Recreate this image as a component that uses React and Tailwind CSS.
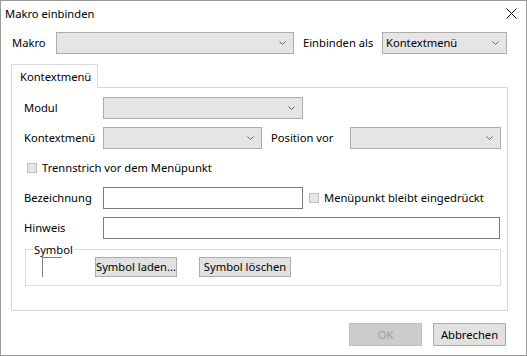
const Chevron = () => (
  <svg width="7" height="4" viewBox="0 0 7 4" className="shrink-0">
    <path d="M0.5 0.5 L3.5 3.5 L6.5 0.5" fill="none" stroke="#606060" strokeWidth="1" />
  </svg>
)

function Combo({ className, value }) {
  return (
    <div
      className={`flex h-[22px] shrink-0 items-center justify-between border border-[#adadad] bg-[#e5e5e5] pl-[3px] pr-[7px] ${className}`}
    >
      <span>{value}</span>
      <Chevron />
    </div>
  )
}

function CheckBox({ label }) {
  return (
    <div className="flex items-center whitespace-nowrap">
      <div className="mr-[5px] h-[10px] w-[10px] border border-[#bcbcbc] bg-[#e6e6e6]" />
      <span>{label}</span>
    </div>
  )
}

function Button({ className, children }) {
  return (
    <div
      className={`flex shrink-0 items-center justify-center whitespace-nowrap border border-[#adadad] bg-[#e1e1e1] ${className}`}
    >
      {children}
    </div>
  )
}

export default function App() {
  return (
    <div
      className="flex h-[356px] w-[527px] flex-col border border-[#999999] bg-white text-[11.2px] leading-none text-black"
      style={{ fontFamily: '"Noto Sans", sans-serif' }}
    >
      {/* title bar */}
      <div className="flex h-[25px] shrink-0 items-center justify-between pl-[4px] pr-[9px]">
        <span>Makro einbinden</span>
        <svg width="11" height="11" viewBox="0 0 11 11">
          <path d="M0.5 0.5 L10.5 10.5 M10.5 0.5 L0.5 10.5" stroke="#111" strokeWidth="1" />
        </svg>
      </div>

      {/* Makro row */}
      <div className="mt-[6px] flex items-center pl-[11px]">
        <span className="w-[44px] shrink-0">Makro</span>
        <Combo className="w-[238px]" />
        <span className="ml-[9px] w-[79px] shrink-0">Einbinden als</span>
        <Combo className="w-[125px]" value="Kontextmenü" />
      </div>

      {/* tab */}
      <div className="mt-[10px] flex flex-col pl-[10px]">
        <div className="relative z-10 -mb-px flex h-[24px] w-[87px] items-center border-x border-t border-[#d9d9d9] bg-white pl-[8px]">
          Kontextmenü
        </div>
        <div className="flex h-[224px] w-[497px] flex-col border border-[#d9d9d9] pl-[12px] pt-[9px]">
          <div className="flex items-center">
            <span className="w-[79px] shrink-0">Modul</span>
            <Combo className="w-[200px]" />
          </div>
          <div className="mt-[8px] flex items-center">
            <span className="w-[79px] shrink-0">Kontextmenü</span>
            <Combo className="w-[159px]" />
            <span className="ml-[9px] w-[79px] shrink-0">Position vor</span>
            <Combo className="w-[151px]" />
          </div>
          <div className="mt-[11px] flex h-[16px] items-center pl-[3px]">
            <CheckBox label="Trennstrich vor dem Menüpunkt" />
          </div>
          <div className="mt-[11px] flex items-center">
            <span className="w-[79px] shrink-0">Bezeichnung</span>
            <div className="h-[22px] w-[200px] shrink-0 border border-[#7a7a7a] bg-white" />
            <div className="ml-[6px]">
              <CheckBox label="Menüpunkt bleibt eingedrückt" />
            </div>
          </div>
          <div className="mt-[8px] flex items-center">
            <span className="w-[79px] shrink-0">Hinweis</span>
            <div className="h-[22px] w-[397px] shrink-0 border border-[#7a7a7a] bg-white" />
          </div>

          {/* Symbol group */}
          <div className="relative ml-[1px] mt-[10px] flex h-[37px] w-[476px] items-start border border-[#dcdcdc] pl-[16px] pt-[7px]">
            <span className="absolute -top-[8px] left-[7px] bg-white px-[1px] leading-[15px]">Symbol</span>
            <div className="h-[20px] w-[20px] shrink-0 border-l border-t border-[#808080]" />
            <Button className="ml-[33px] h-[20px] w-[82px]">Symbol laden...</Button>
            <Button className="ml-[22px] h-[20px] w-[92px]">Symbol löschen</Button>
          </div>
        </div>
      </div>

      {/* dialog buttons */}
      <div className="mt-[12px] flex justify-end gap-[11px] pr-[20px]">
        <div className="flex h-[23px] w-[73px] items-center justify-center border border-[#bfbfbf] bg-[#cccccc] text-[#a0a0a0]">
          OK
        </div>
        <Button className="h-[23px] w-[73px]">Abbrechen</Button>
      </div>
    </div>
  )
}
